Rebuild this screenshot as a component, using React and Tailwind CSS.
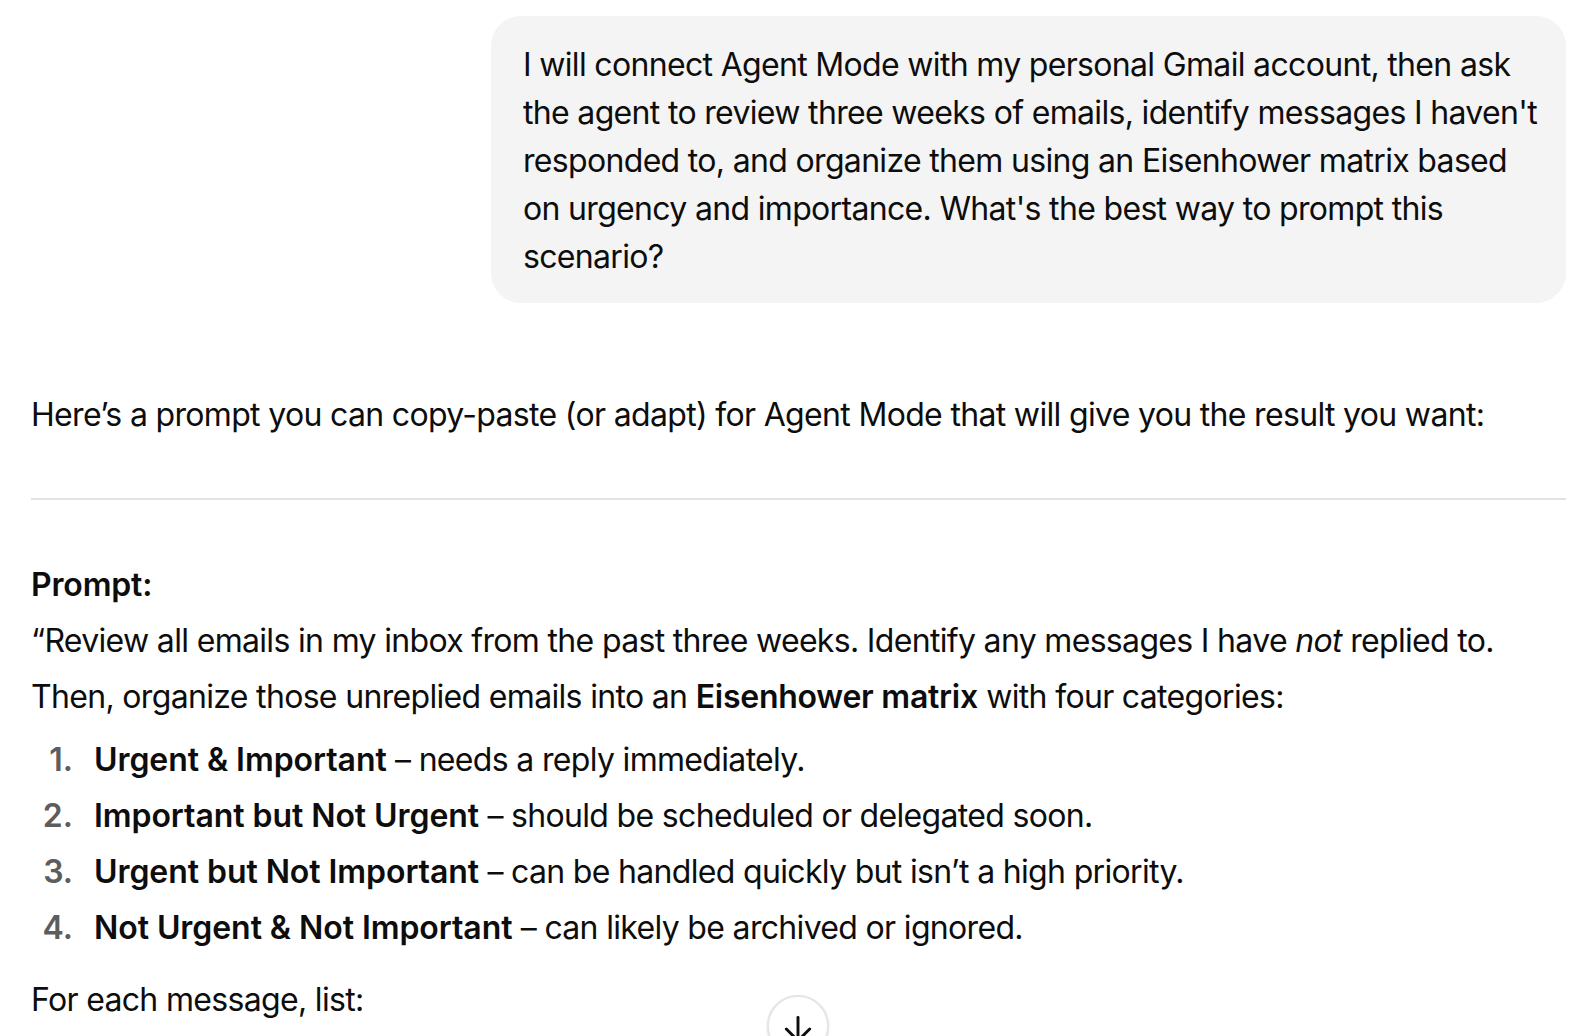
import { ArrowDown } from "lucide-react";

const items = [
  { title: "Urgent & Important", rest: "needs a reply immediately." },
  { title: "Important but Not Urgent", rest: "should be scheduled or delegated soon." },
  { title: "Urgent but Not Important", rest: "can be handled quickly but isn’t a high priority." },
  { title: "Not Urgent & Not Important", rest: "can likely be archived or ignored." },
];

export default function App() {
  return (
    <div
      className="relative h-[1036px] w-[1590px] overflow-hidden bg-white text-[#0d0d0d]"
      style={{ fontFamily: "Inter, 'Liberation Sans', sans-serif" }}
    >
      <div className="pl-[31px] pr-[24px] pt-4">
        {/* user message */}
        <div className="flex justify-end">
          <div className="w-[1075px] rounded-[30px] bg-[#f4f4f4] pl-8 pr-6 pt-[25px] pb-[22px] text-[32px] leading-[48px] tracking-[-0.021em]">
            I will connect Agent Mode with my personal Gmail account, then ask the agent to review three weeks of emails, identify messages I haven't responded to, and organize them using an Eisenhower matrix based on urgency and importance. What's the best way to prompt this scenario?
          </div>
        </div>

        {/* assistant reply */}
        <div className="mt-[84px] text-[32px] leading-[56px] tracking-[-0.021em]">
          <p>Here’s a prompt you can copy-paste (or adapt) for Agent Mode that will give you the result you want:</p>

          <hr className="mt-[55px] border-t-2 border-[#e3e3e3]" />

          <p className="mt-[57px] font-semibold tracking-[-0.005em]">Prompt:</p>
          <p>
            “Review all emails in my inbox from the past three weeks. Identify any messages I have <em>not</em> replied to.
          </p>
          <p>
            Then, organize those unreplied emails into an{" "}
            <strong className="font-semibold tracking-[-0.008em]">Eisenhower matrix</strong> with four categories:
          </p>

          <ol className="mt-[7px]">
            {items.map((it, i) => (
              <li key={i} className="flex">
                <span className="w-[63px] shrink-0 pr-[21px] text-right font-semibold tracking-normal text-[#5d5d5d]">
                  {i + 1}.
                </span>
                <span>
                  <strong className="font-semibold tracking-[-0.002em]">{it.title}</strong> – {it.rest}
                </span>
              </li>
            ))}
          </ol>

          <p className="mt-4">For each message, list:</p>
        </div>
      </div>

      {/* scroll to bottom */}
      <button className="absolute left-[767px] top-[995px] flex h-[62px] w-[62px] items-start justify-center rounded-full border-2 border-[#e5e5e5] bg-white pt-[12px] shadow-sm">
        <ArrowDown size={40} strokeWidth={1.75} color="#0d0d0d" />
      </button>
    </div>
  );
}
